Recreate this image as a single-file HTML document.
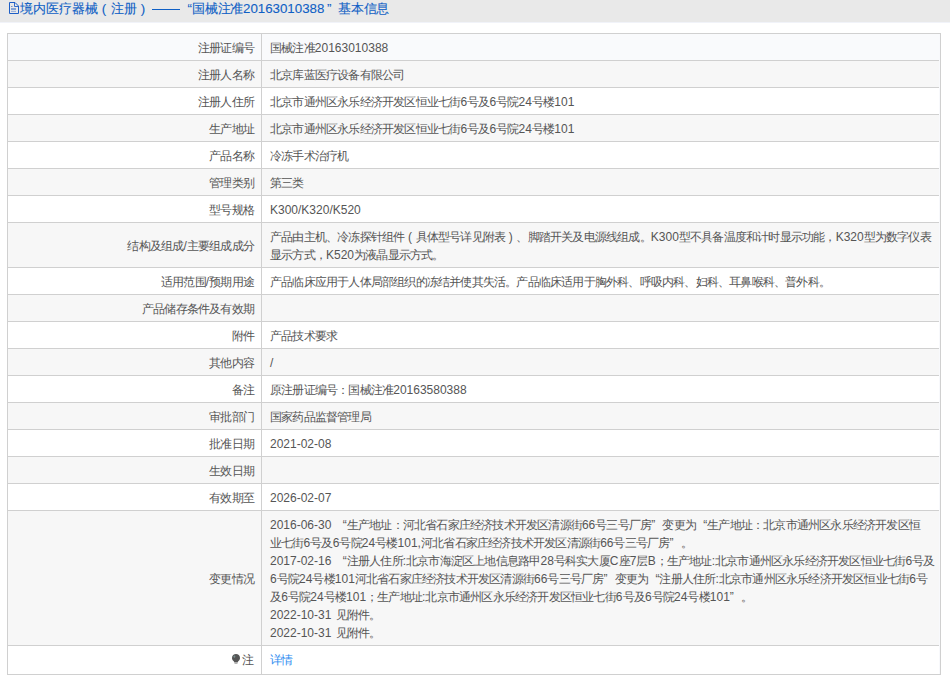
<!DOCTYPE html>
<html><head><meta charset="utf-8">
<style>
html,body{margin:0;padding:0;background:#fff;}
body{width:950px;height:680px;overflow:hidden;position:relative;font-family:"Liberation Sans",sans-serif;}
.hd{position:absolute;left:0;top:0;width:950px;height:22px;background:#e9e9e9;}
.hd .t{position:absolute;left:20px;top:1px;height:22px;line-height:16px;font-size:13.3px;letter-spacing:-0.25px;color:#0f5fc5;white-space:nowrap;-webkit-text-stroke:0.1px #0f5fc5;}
.hd .t .a{letter-spacing:0;}
.hl{position:absolute;left:0;top:22px;width:950px;height:1px;background:#f1f3f9;}
.dash{position:absolute;left:152px;top:9px;width:28px;height:1px;background:#0f5fc5;}
.hd svg{position:absolute;left:8.5px;top:1.5px;}
table{position:absolute;left:7px;top:33px;width:934px;border-collapse:collapse;table-layout:fixed;font-size:12px;letter-spacing:-0.8px;color:#555;}
td{border:1px solid #d0d0d0;padding:5px 0 3px;line-height:18px;white-space:nowrap;vertical-align:middle;}
td.l{width:254px;text-align:right;padding-right:7px;box-sizing:border-box;color:#555;}
td.v{padding-left:8px;}
.a{letter-spacing:0px;}
.ql,.qr{display:inline-block;width:11.2px;letter-spacing:0;}
td .sp{letter-spacing:0.8px;}
.pc{display:inline-block;width:11.2px;text-align:center;letter-spacing:0;}
.hd .pc{width:13px;}
.ql{text-align:right;}
.qr{text-align:left;}
tr:nth-child(even) td{background:#f7f7f7;}
tr.first td{background:#f9fafc;}
a{color:#2d8cf0;text-decoration:none;}
tr.last td{padding:5px 0 5px;}
tr.last td.l{padding:5px 8px 5px 0;}
tr.last td.v{padding-left:8px;}
.bulb{vertical-align:0;margin-right:2px;}
</style></head><body>
<div class="hd">
<svg width="11" height="13" viewBox="0 0 11 13"><path d="M.5 .5h5.5l3.5 3.5v7.5H.5z" fill="none" stroke="#1f5fc6"/><path d="M5.5 .8v3.7h3.7" fill="none" stroke="#1f5fc6" stroke-width=".9"/><rect x="2" y="4" width="1.5" height="1" fill="#6f8fcf"/><rect x="2" y="6.5" width="5" height="1" fill="#1f5fc6"/><rect x="2" y="8.8" width="5" height="1.2" fill="#9fb3dc"/></svg>
<div class="t" style="left:19.5px;letter-spacing:0">境内医疗器械<span class="pc">(</span>注册<span class="pc">)</span></div>
<div class="dash"></div>
<div class="hl"></div>
<div class="t" style="left:187.5px"><span class="ql" style="width:6px;text-align:left">“</span></div>
<div class="t" style="left:192px">国械注准<span class="a">20163010388</span></div>
<div class="t" style="left:327px"><span class="qr" style="width:6px">”</span></div>
<div class="t" style="left:338px">基本信息</div>
</div>
<table>
<tr class="first"><td class="l">注册证编号</td><td class="v">国械注准<span class="a">20163010388</span></td></tr>
<tr><td class="l">注册人名称</td><td class="v">北京库蓝医疗设备有限公司</td></tr>
<tr><td class="l">注册人住所</td><td class="v">北京市通州区永乐经济开发区恒业七街<span class="a">6</span>号及<span class="a">6</span>号院<span class="a">24</span>号楼<span class="a">101</span></td></tr>
<tr><td class="l">生产地址</td><td class="v">北京市通州区永乐经济开发区恒业七街<span class="a">6</span>号及<span class="a">6</span>号院<span class="a">24</span>号楼<span class="a">101</span></td></tr>
<tr><td class="l">产品名称</td><td class="v">冷冻手术治疗机</td></tr>
<tr><td class="l">管理类别</td><td class="v">第三类</td></tr>
<tr><td class="l">型号规格</td><td class="v"><span class="a">K300/K320/K520</span></td></tr>
<tr><td class="l">结构及组成<span class="a">/</span>主要组成成分</td><td class="v">产品由主机、冷冻探针组件<span class="pc">(</span>具体型号详见附表<span class="pc">)</span>、脚踏开关及电源线组成。<span class="a">K300</span>型不具备温度和计时显示功能，<span class="a">K320</span>型为数字仪表<br>显示方式，<span class="a">K520</span>为液晶显示方式。</td></tr>
<tr><td class="l">适用范围<span class="a">/</span>预期用途</td><td class="v">产品临床应用于人体局部组织的冻结并使其失活。产品临床适用于胸外科、呼吸内科、妇科、耳鼻喉科、普外科。</td></tr>
<tr><td class="l">产品储存条件及有效期</td><td class="v"></td></tr>
<tr><td class="l">附件</td><td class="v">产品技术要求</td></tr>
<tr><td class="l">其他内容</td><td class="v"><span class="a">/</span></td></tr>
<tr><td class="l">备注</td><td class="v">原注册证编号：国械注准<span class="a">20163580388</span></td></tr>
<tr><td class="l">审批部门</td><td class="v">国家药品监督管理局</td></tr>
<tr><td class="l">批准日期</td><td class="v"><span class="a">2021-02-08</span></td></tr>
<tr><td class="l">生效日期</td><td class="v"></td></tr>
<tr><td class="l">有效期至</td><td class="v"><span class="a">2026-02-07</span></td></tr>
<tr><td class="l">变更情况</td><td class="v"><span class="a">2016-06-30</span><span class="sp"> </span><span class="ql">“</span>生产地址：河北省石家庄经济技术开发区清源街<span class="a">66</span>号三号厂房<span class="qr">”</span>变更为<span class="ql">“</span>生产地址：北京市通州区永乐经济开发区恒<br>业七街<span class="a">6</span>号及<span class="a">6</span>号院<span class="a">24</span>号楼<span class="a">101,</span>河北省石家庄经济技术开发区清源街<span class="a">66</span>号三号厂房<span class="qr">”</span>。<br><span class="a">2017-02-16</span><span class="sp"> </span><span class="ql">“</span>注册人住所<span class="a">:</span>北京市海淀区上地信息路甲<span class="a">28</span>号科实大厦<span class="a">C</span>座<span class="a">7</span>层<span class="a">B</span>；生产地址<span class="a">:</span>北京市通州区永乐经济开发区恒业七街<span class="a">6</span>号及<br><span class="a">6</span>号院<span class="a">24</span>号楼<span class="a">101</span>河北省石家庄经济技术开发区清源街<span class="a">66</span>号三号厂房<span class="qr">”</span>变更为<span class="ql">“</span>注册人住所<span class="a">:</span>北京市通州区永乐经济开发区恒业七街<span class="a">6</span>号<br>及<span class="a">6</span>号院<span class="a">24</span>号楼<span class="a">101</span>；生产地址<span class="a">:</span>北京市通州区永乐经济开发区恒业七街<span class="a">6</span>号及<span class="a">6</span>号院<span class="a">24</span>号楼<span class="a">101</span><span class="qr">”</span>。<br><span class="a">2022-10-31</span><span class="sp"> </span>见附件。<br><span class="a">2022-10-31</span><span class="sp"> </span>见附件。</td></tr>
<tr class="last"><td class="l"><svg class="bulb" width="8" height="10" viewBox="0 0 8 10"><path d="M4 0C1.8 0 0 1.7 0 3.9c0 1.4.7 2.3 1.5 3.1.5.5.8.9.8 1.5h3.4c0-.6.3-1 .8-1.5C7.3 6.2 8 5.3 8 3.9 8 1.7 6.2 0 4 0z" fill="#555"/><rect x="2.5" y="8.6" width="3" height="1.4" fill="#b5b5b5"/><ellipse cx="2.4" cy="2.6" rx=".9" ry="1.2" fill="#8aa" opacity=".7"/></svg>注</td><td class="v"><a>详情</a></td></tr>
</table>
<div style="position:absolute;left:939px;top:34px;width:1px;height:640px;background:#f8f9fc"></div>
</body></html>
